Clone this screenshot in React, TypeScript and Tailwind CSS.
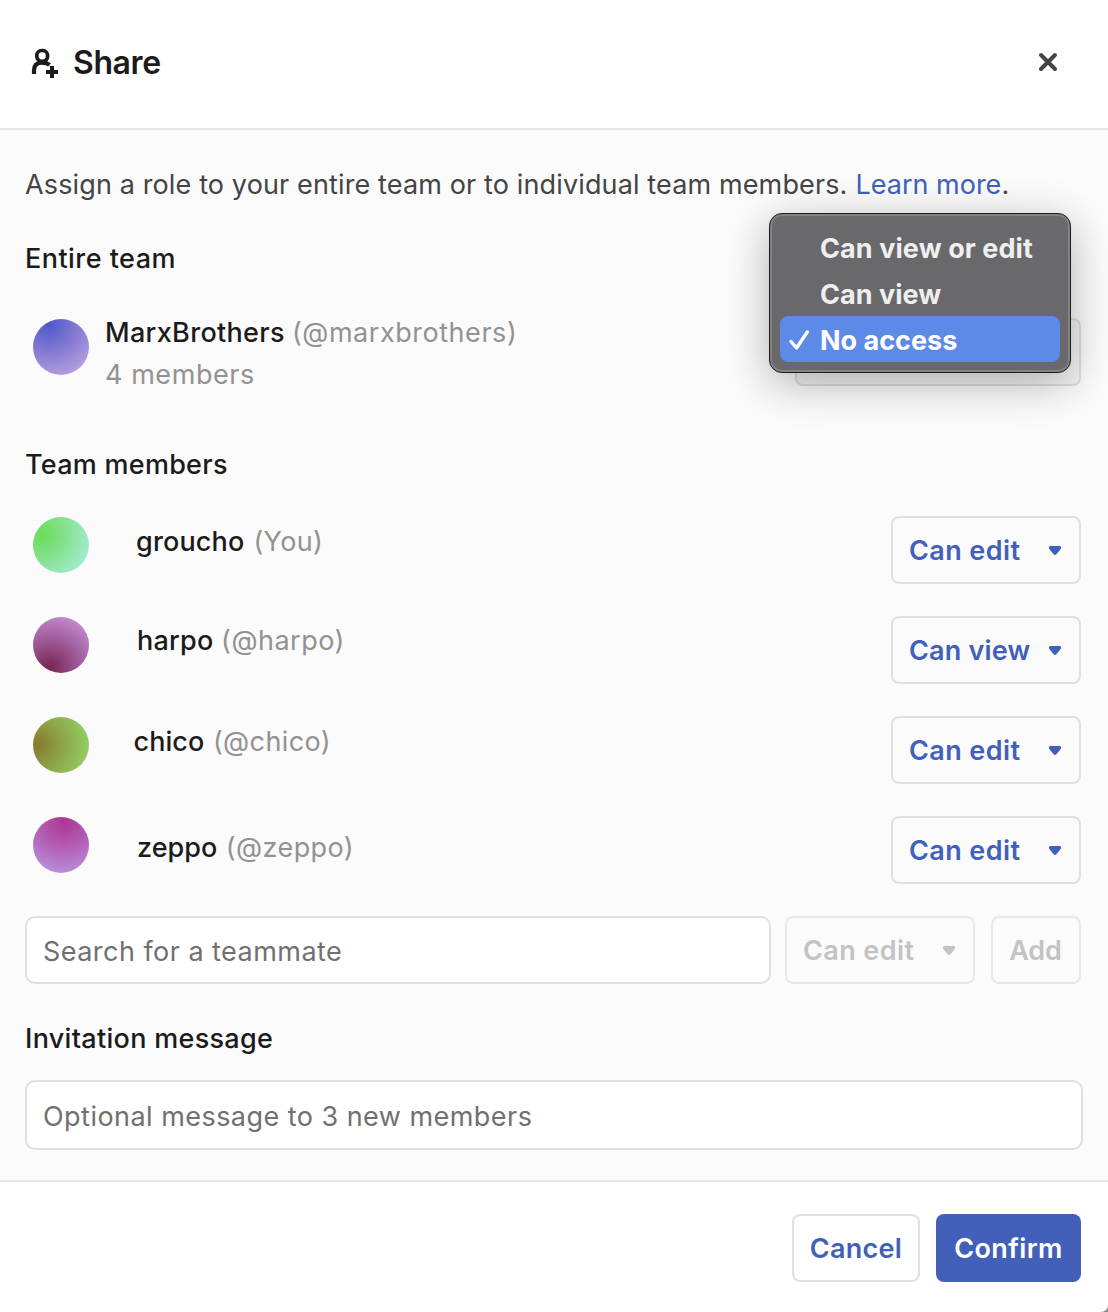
import type { ReactNode } from "react";

function Caret() {
  return (
    <svg width="12" height="9" viewBox="0 0 12 9" className="shrink-0" fill="currentColor">
      <path d="M1.6 0H10.4C12 0 12.5 1.8 11.6 3.1C10.6 4.6 8.8 6.8 7.4 8.2C6.6 9.1 5.4 9.1 4.6 8.2C3.2 6.8 1.4 4.6 0.4 3.1C-0.5 1.8 0 0 1.6 0Z" />
    </svg>
  );
}

function RoleSelect({ label, spacing = "tracking-[0.4px]", disabled = false }: { label: string; spacing?: string; disabled?: boolean }) {
  return (
    <button
      className={`flex h-[68px] w-[190px] shrink-0 items-center justify-between rounded-lg border-2 pl-4 pr-[18px] font-semibold ${
        disabled ? "border-[#e8e8e8] text-[#c3c3c3]" : "border-[#e0e0e0] text-[#4260ba]"
      }`}
    >
      <span className={`pt-[2px] ${spacing}`}>{label}</span>
      <Caret />
    </button>
  );
}

function Avatar({ fill }: { fill: string }) {
  return <div className={`size-14 shrink-0 rounded-full ${fill}`} />;
}

const members = [
  {
    name: "groucho", handle: "(You)", role: "Can edit", roleSpacing: "tracking-[0.4px]",
    fill: "bg-[radial-gradient(circle_at_14%_30%,#6bdb5b_0%,#84e18d_40%,#a5edd9_88%)]",
    place: "pl-[47px] pt-[6px] gap-[9px]", nameSpacing: "tracking-[0.16px]", handleSpacing: "tracking-[0.3px]",
  },
  {
    name: "harpo", handle: "(@harpo)", role: "Can view", roleSpacing: "tracking-[0.2px]",
    fill: "bg-[radial-gradient(circle_at_30%_92%,#772450_0%,#9a5490_40%,#c58ed4_88%)]",
    place: "pl-12 pt-[5px] gap-[7.5px]", nameSpacing: "tracking-[0.24px]", handleSpacing: "tracking-[0.5px]",
  },
  {
    name: "chico", handle: "(@chico)", role: "Can edit", roleSpacing: "tracking-[0.4px]",
    fill: "bg-[radial-gradient(circle_at_8%_50%,#877a2f_0%,#8daa4a_48%,#92cd62_88%)]",
    place: "pl-[44.5px] pt-[6px] gap-[8.5px]", nameSpacing: "tracking-[0.07px]", handleSpacing: "tracking-[0.4px]",
  },
  {
    name: "zeppo", handle: "(@zeppo)", role: "Can edit", roleSpacing: "tracking-[0.4px]",
    fill: "bg-[radial-gradient(circle_at_56%_8%,#ad3690_0%,#b25cb2_42%,#ba90dc_88%)]",
    place: "pl-12 pt-3 gap-[8.5px]", nameSpacing: "tracking-[0.03px]", handleSpacing: "tracking-[0.4px]",
  },
];

function SectionTitle({ children, className }: { children: ReactNode; className: string }) {
  return <h2 className={`font-medium text-[#1b1b1b] ${className}`}>{children}</h2>;
}

function RoleMenu() {
  return (
    <div className="absolute left-[-28px] top-[-107px] flex h-40 w-[302px] flex-col rounded-[13px] border border-[#1c1c1c] bg-[#69686a] pl-[10px] pt-[10px] font-bold leading-[50px] text-[#efefef] shadow-[0_10px_44px_rgba(0,0,0,0.3),inset_0_0_0_2px_#838383]">
      <div className="h-[46px] pl-10 tracking-[0.08px]">Can view or edit</div>
      <div className="h-[46px] pl-10 tracking-[0.04px]">Can view</div>
      <div className="flex h-[46px] w-[280px] items-start rounded-lg bg-[#5d8ae6] pl-2 text-white">
        <svg width="22" height="22" viewBox="0 0 22 22" className="mt-[13px]" fill="none" stroke="currentColor" strokeWidth="3.4" strokeLinecap="round" strokeLinejoin="round">
          <path d="M3 12.5L8.5 19L19.3 3" />
        </svg>
        <span className="ml-[10px]">No access</span>
      </div>
    </div>
  );
}

export default function App() {
  return (
    <div className="bg-[#8c8c8c]">
      <div className="flex h-[1312px] w-full flex-col overflow-hidden rounded-br-[7px] bg-white font-['Inter',sans-serif] text-[27px] leading-10">
        <header className="flex h-[130px] shrink-0 items-start border-b-2 border-[#e8e8e8] pl-[30px] pr-[50px] pt-[43px]">
          <svg width="30" height="32" viewBox="30 48 30 32" className="mt-[5px]" fill="none" stroke="#1b1b1b">
            <rect x="36.8" y="50.5" width="10.8" height="10.8" rx="5" strokeWidth="3.7" />
            <path d="M34 74V70.5C34 65.3 37 62.6 42 62.6C45 62.6 47.3 63 49.6 64.8" strokeWidth="4.2" />
            <path d="M52 66V78M46 72H58" strokeWidth="4" />
          </svg>
          <h1 className="ml-[13px] text-[32px] font-semibold tracking-[-0.4px] text-[#1b1b1b]">Share</h1>
          <button aria-label="Close" className="ml-auto mt-[9px]">
            <svg width="20" height="20" viewBox="0 0 20 20" fill="none" stroke="#454545" strokeWidth="4" strokeLinecap="round">
              <path d="M3 3L17 17M17 3L3 17" />
            </svg>
          </button>
        </header>

        <main className="flex h-[1050px] shrink-0 flex-col bg-[#fbfbfb] pl-[25px] pr-[27px] pt-[35px]">
          <p className="h-10 whitespace-nowrap text-[#444444]">
            <span className="tracking-[0.13px]">Assign a role to your entire team or to individual team members.</span>
            <a className="ml-2 text-[#4260ba]">Learn more</a>.
          </p>
          <SectionTitle className="mt-[34px] tracking-[0.46px]">Entire team</SectionTitle>
          <div className="mt-[39px] flex h-[68px] items-start pl-2">
            <div className="pt-px">
              <Avatar fill="bg-[radial-gradient(circle_at_28%_8%,#4c58cb_0%,#8a7dd3_48%,#bba5e1_90%)]" />
            </div>
            <div className="-mt-[5px] ml-4 text-[#929292]">
              <div className="flex h-[42px] gap-[7px]">
                <span className="font-medium tracking-[0.31px] text-[#1b1b1b]">MarxBrothers</span>
                <span className="tracking-[0.54px]">(@marxbrothers)</span>
              </div>
              <div className="tracking-[0.56px]">4 members</div>
            </div>
            <div className="relative ml-auto h-[68px] w-[286px] rounded-lg border-2 border-[#dedede] bg-[#f4f4f4]">
              <RoleMenu />
            </div>
          </div>

          <SectionTitle className="mt-[59px] tracking-[0.27px]">Team members</SectionTitle>
          <div className="mt-[31px] flex flex-col gap-8 pl-2">
            {members.map((m) => (
              <div key={m.name} className="flex h-[68px] items-start">
                <div className="pt-px">
                  <Avatar fill={m.fill} />
                </div>
                <div className={`flex ${m.place}`}>
                  <span className={`font-medium text-[#1b1b1b] ${m.nameSpacing}`}>{m.name}</span>
                  <span className={`text-[#929292] ${m.handleSpacing}`}>{m.handle}</span>
                </div>
                <div className="ml-auto">
                  <RoleSelect label={m.role} spacing={m.roleSpacing} />
                </div>
              </div>
            ))}
          </div>

          <div className="mt-8 flex">
            <input
              placeholder="Search for a teammate"
              className="h-[68px] w-[746px] rounded-[10px] border-2 border-[#e0e0e0] bg-white px-4 pt-[2px] tracking-[0.46px] placeholder:text-[#707070] placeholder:opacity-100"
            />
            <div className="ml-[14px]">
              <RoleSelect label="Can edit" disabled />
            </div>
            <button className="ml-4 h-[68px] w-[90px] rounded-lg border-2 border-[#e8e8e8] pr-px pt-[2px] font-semibold tracking-[-0.1px] text-[#c3c3c3]">Add</button>
          </div>

          <SectionTitle className="mt-[35px] tracking-[0.3px]">Invitation message</SectionTitle>
          <input
            placeholder="Optional message to 3 new members"
            className="mt-[21px] h-[70px] w-[1058px] shrink-0 rounded-[10px] border-2 border-[#e0e0e0] bg-white px-4 pt-[2px] tracking-[0.46px] placeholder:text-[#707070] placeholder:opacity-100"
          />
        </main>

        <footer className="flex grow justify-end gap-4 border-t-2 border-[#e8e8e8] pr-[27px] pt-8 font-semibold">
          <button className="h-[68px] w-32 rounded-lg border-2 border-[#e0e0e0] pt-[2px] tracking-[0.28px] text-[#4260ba]">Cancel</button>
          <button className="h-[68px] w-[145px] rounded-lg bg-[#4260ba] pt-[2px] tracking-[0.4px] text-white">Confirm</button>
        </footer>
      </div>
    </div>
  );
}
